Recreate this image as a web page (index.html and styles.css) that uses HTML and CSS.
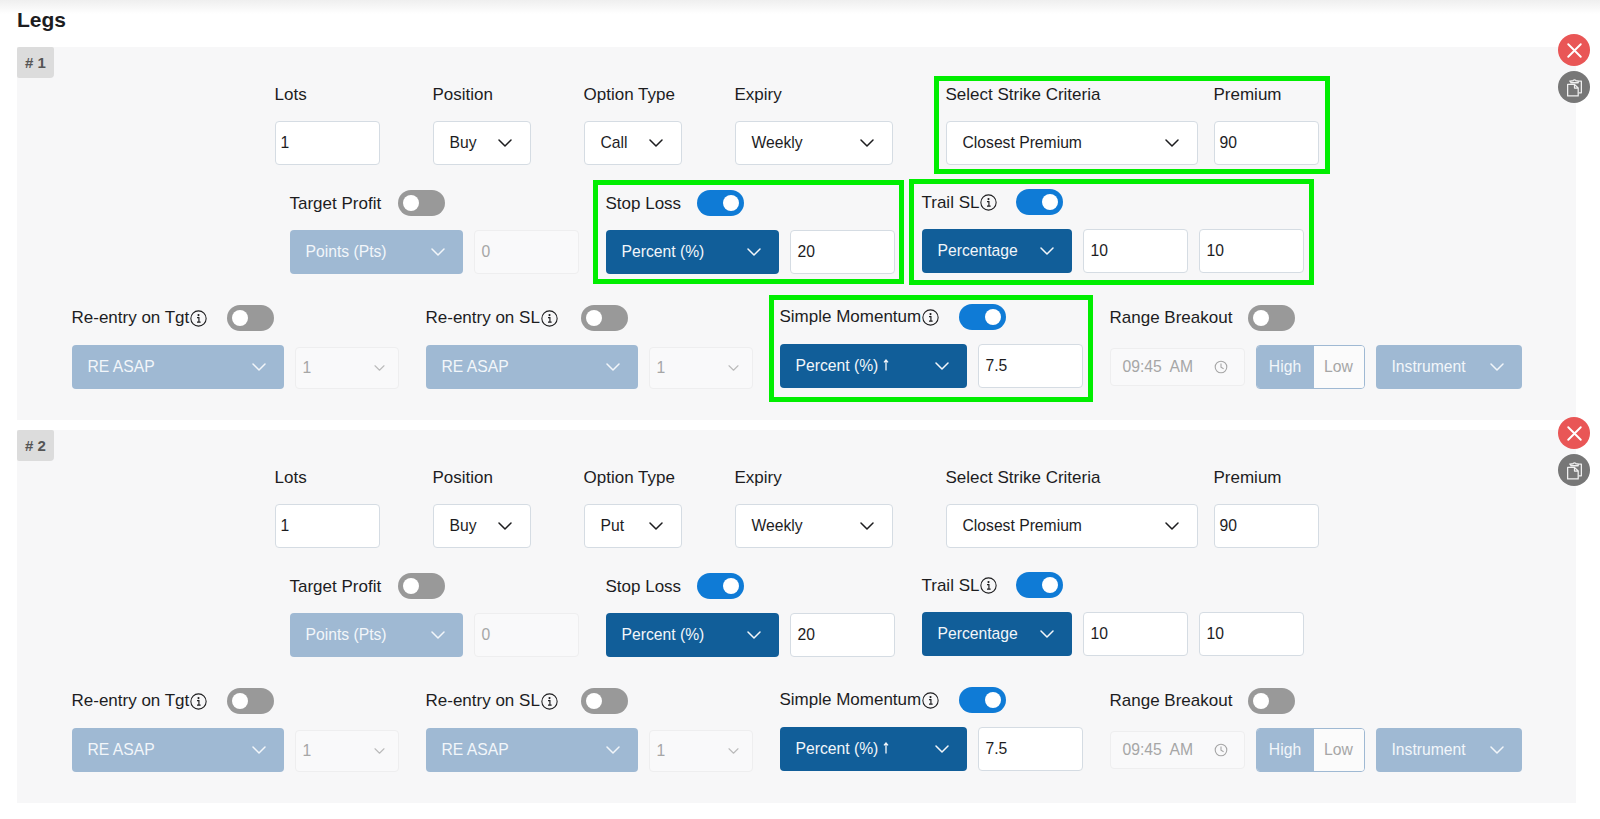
FILE: index.html
```html
<!DOCTYPE html>
<html lang="en">
<head>
  <meta charset="UTF-8">
  <meta name="viewport" content="width=device-width, initial-scale=1.0">
  <title>Legs</title>
  <link rel="stylesheet" href="styles.css">
</head>
<body>
  <svg class="sprites" width="0" height="0" aria-hidden="true">
    <symbol id="chev" viewBox="0 0 14 8"><path d="M1 1l6 6 6-6" fill="none" stroke="currentColor" stroke-width="1.5" stroke-linecap="round" stroke-linejoin="round"/></symbol>
    <symbol id="info" viewBox="0 0 16 16"><circle cx="8" cy="8" r="7.2" fill="none" stroke="currentColor" stroke-width="1"/><circle cx="8" cy="4.8" r="1" fill="currentColor"/><path d="M6.6 7.2H8.4V11.2M6.6 11.4H10" fill="none" stroke="currentColor" stroke-width="1.1"/></symbol>
    <symbol id="clock" viewBox="0 0 14 14"><circle cx="7" cy="7" r="5.8" fill="none" stroke="currentColor" stroke-width="1.1"/><path d="M7 3.6V7.2L9.6 8.8" fill="none" stroke="currentColor" stroke-width="1.1"/></symbol>
    <symbol id="cross" viewBox="0 0 12 12"><path d="M1 1l10 10M11 1L1 11" fill="none" stroke="currentColor" stroke-width="1.5" stroke-linecap="round"/></symbol>
    <symbol id="copy" viewBox="0 0 16 18"><path d="M4.5 4.5V2.8H6.5C6.7 1.4 9.3 1.4 9.5 2.8H11.5V4.5ZM11.5 3H14.5V14H12M4.5 3H3" fill="none" stroke="currentColor" stroke-width="1.2" stroke-linejoin="round"/><path d="M1.5 6H8L11.5 9.5V17H1.5ZM8 6V9.5H11.5" fill="none" stroke="currentColor" stroke-width="1.2" stroke-linejoin="round"/></symbol>
    <symbol id="up" viewBox="0 0 6 12"><path d="M3 11.5V1M1 3.4L3 1L5 3.4" fill="none" stroke="currentColor" stroke-width="1.3"/></symbol>
  </svg>

  <h1 class="title">Legs</h1>

  <!-- leg 1 -->
  <section class="leg">
    <div class="leg-tag"># 1</div>
    <div class="leg-actions">
      <button class="round-btn red"><svg class="ic-cross"><use href="#cross"/></svg></button>
      <button class="round-btn grey"><svg class="ic-copy"><use href="#copy"/></svg></button>
    </div>

    <div class="row row-main">
      <div class="field w-lots"><label>Lots</label><div class="box">1</div></div>
      <div class="field w-pos"><label>Position</label><div class="box pick">Buy<svg class="chev"><use href="#chev"/></svg></div></div>
      <div class="field w-pos"><label>Option Type</label><div class="box pick">Call<svg class="chev"><use href="#chev"/></svg></div></div>
      <div class="field w-expiry"><label>Expiry</label><div class="box pick">Weekly<svg class="chev"><use href="#chev"/></svg></div></div>
      <div class="strike mark mark-strike">
        <div class="field w-strike"><label>Select Strike Criteria</label><div class="box pick">Closest Premium<svg class="chev"><use href="#chev"/></svg></div></div>
        <div class="field w-lots"><label>Premium</label><div class="box">90</div></div>
      </div>
    </div>

    <div class="row row-exit">
      <div class="group">
        <div class="head"><span class="head-text w-target">Target Profit</span><span class="toggle"></span></div>
        <div class="controls"><div class="pick solid off w-unit">Points (Pts)<svg class="chev"><use href="#chev"/></svg></div><div class="box dim w-num">0</div></div>
      </div>
      <div class="group mark mark-stop">
        <div class="head"><span class="head-text w-stop">Stop Loss</span><span class="toggle on"></span></div>
        <div class="controls"><div class="pick solid w-unit">Percent (%)<svg class="chev"><use href="#chev"/></svg></div><div class="box w-num">20</div></div>
      </div>
      <div class="group up1 mark mark-trail">
        <div class="head"><span class="head-text w-trail">Trail SL<svg class="info"><use href="#info"/></svg></span><span class="toggle on"></span></div>
        <div class="controls"><div class="pick solid w-pct">Percentage<svg class="chev"><use href="#chev"/></svg></div><div class="box w-num">10</div><div class="box w-num">10</div></div>
      </div>
    </div>

    <div class="row row-extra">
      <div class="group">
        <div class="head"><span class="head-text w-re">Re-entry on Tgt<svg class="info"><use href="#info"/></svg></span><span class="toggle"></span></div>
        <div class="controls"><div class="pick solid off w-re-pick">RE ASAP<svg class="chev"><use href="#chev"/></svg></div><div class="box dim pick w-count">1<svg class="chev small"><use href="#chev"/></svg></div></div>
      </div>
      <div class="group">
        <div class="head"><span class="head-text w-re">Re-entry on SL<svg class="info"><use href="#info"/></svg></span><span class="toggle"></span></div>
        <div class="controls"><div class="pick solid off w-re-pick">RE ASAP<svg class="chev"><use href="#chev"/></svg></div><div class="box dim pick w-count">1<svg class="chev small"><use href="#chev"/></svg></div></div>
      </div>
      <div class="group up1 mark mark-momentum">
        <div class="head"><span class="head-text w-mom">Simple Momentum<svg class="info"><use href="#info"/></svg></span><span class="toggle on"></span></div>
        <div class="controls"><div class="pick solid w-mom-pick"><span>Percent (%)<svg class="up"><use href="#up"/></svg></span><svg class="chev"><use href="#chev"/></svg></div><div class="box w-num">7.5</div></div>
      </div>
      <div class="group">
        <div class="head"><span class="head-text w-range">Range Breakout</span><span class="toggle"></span></div>
        <div class="controls">
          <div class="box dim time">09:45&nbsp; AM<svg class="clock"><use href="#clock"/></svg></div>
          <div class="hilo"><span class="hilo-on">High</span><span class="hilo-off">Low</span></div>
          <div class="pick solid off w-inst">Instrument<svg class="chev"><use href="#chev"/></svg></div>
        </div>
      </div>
    </div>
  </section>

  <!-- leg 2 -->
  <section class="leg">
    <div class="leg-tag"># 2</div>
    <div class="leg-actions">
      <button class="round-btn red"><svg class="ic-cross"><use href="#cross"/></svg></button>
      <button class="round-btn grey"><svg class="ic-copy"><use href="#copy"/></svg></button>
    </div>

    <div class="row row-main">
      <div class="field w-lots"><label>Lots</label><div class="box">1</div></div>
      <div class="field w-pos"><label>Position</label><div class="box pick">Buy<svg class="chev"><use href="#chev"/></svg></div></div>
      <div class="field w-pos"><label>Option Type</label><div class="box pick">Put<svg class="chev"><use href="#chev"/></svg></div></div>
      <div class="field w-expiry"><label>Expiry</label><div class="box pick">Weekly<svg class="chev"><use href="#chev"/></svg></div></div>
      <div class="strike">
        <div class="field w-strike"><label>Select Strike Criteria</label><div class="box pick">Closest Premium<svg class="chev"><use href="#chev"/></svg></div></div>
        <div class="field w-lots"><label>Premium</label><div class="box">90</div></div>
      </div>
    </div>

    <div class="row row-exit">
      <div class="group">
        <div class="head"><span class="head-text w-target">Target Profit</span><span class="toggle"></span></div>
        <div class="controls"><div class="pick solid off w-unit">Points (Pts)<svg class="chev"><use href="#chev"/></svg></div><div class="box dim w-num">0</div></div>
      </div>
      <div class="group">
        <div class="head"><span class="head-text w-stop">Stop Loss</span><span class="toggle on"></span></div>
        <div class="controls"><div class="pick solid w-unit">Percent (%)<svg class="chev"><use href="#chev"/></svg></div><div class="box w-num">20</div></div>
      </div>
      <div class="group up1">
        <div class="head"><span class="head-text w-trail">Trail SL<svg class="info"><use href="#info"/></svg></span><span class="toggle on"></span></div>
        <div class="controls"><div class="pick solid w-pct">Percentage<svg class="chev"><use href="#chev"/></svg></div><div class="box w-num">10</div><div class="box w-num">10</div></div>
      </div>
    </div>

    <div class="row row-extra">
      <div class="group">
        <div class="head"><span class="head-text w-re">Re-entry on Tgt<svg class="info"><use href="#info"/></svg></span><span class="toggle"></span></div>
        <div class="controls"><div class="pick solid off w-re-pick">RE ASAP<svg class="chev"><use href="#chev"/></svg></div><div class="box dim pick w-count">1<svg class="chev small"><use href="#chev"/></svg></div></div>
      </div>
      <div class="group">
        <div class="head"><span class="head-text w-re">Re-entry on SL<svg class="info"><use href="#info"/></svg></span><span class="toggle"></span></div>
        <div class="controls"><div class="pick solid off w-re-pick">RE ASAP<svg class="chev"><use href="#chev"/></svg></div><div class="box dim pick w-count">1<svg class="chev small"><use href="#chev"/></svg></div></div>
      </div>
      <div class="group up1">
        <div class="head"><span class="head-text w-mom">Simple Momentum<svg class="info"><use href="#info"/></svg></span><span class="toggle on"></span></div>
        <div class="controls"><div class="pick solid w-mom-pick"><span>Percent (%)<svg class="up"><use href="#up"/></svg></span><svg class="chev"><use href="#chev"/></svg></div><div class="box w-num">7.5</div></div>
      </div>
      <div class="group">
        <div class="head"><span class="head-text w-range">Range Breakout</span><span class="toggle"></span></div>
        <div class="controls">
          <div class="box dim time">09:45&nbsp; AM<svg class="clock"><use href="#clock"/></svg></div>
          <div class="hilo"><span class="hilo-on">High</span><span class="hilo-off">Low</span></div>
          <div class="pick solid off w-inst">Instrument<svg class="chev"><use href="#chev"/></svg></div>
        </div>
      </div>
    </div>
  </section>
</body>
</html>
```

FILE: styles.css
```css
* {
  box-sizing: border-box;
}
html, body {
  height: 100%;
}
body {
  margin: 0;
  padding: 0 24px 0 17px;
  overflow: hidden;
  font-family: "Liberation Sans", Arial, sans-serif;
  font-size: 15.7px;
  color: #1d1d1f;
  background: linear-gradient(#efefef, #ffffff 14px);
}
.sprites {
  position: absolute;
}
.title {
  margin: 0;
  height: 47px;
  padding-top: 8px;
  font-size: 21px;
  line-height: 24px;
  font-weight: bold;
}
.leg {
  position: relative;
  height: 373px;
  margin-bottom: 10px;
  background: #f7f7f8;
}
.leg-tag {
  width: 37px;
  height: 31px;
  background: #dcdcdc;
  border-radius: 2px 2px 4px 2px;
  color: #555;
  font-size: 15px;
  font-weight: bold;
  line-height: 31px;
  text-align: center;
}
.leg-actions {
  position: absolute;
  top: -13px;
  right: -14px;
  display: flex;
  flex-direction: column;
  gap: 5px;
}
.round-btn {
  display: flex;
  align-items: center;
  justify-content: center;
  width: 32px;
  height: 32px;
  padding: 0;
  border: none;
  border-radius: 50%;
  color: #fff;
}
.round-btn.red {
  background: #e95656;
}
.round-btn.grey {
  background: #777;
  color: #f0f0f0;
}
.ic-cross {
  width: 15px;
  height: 15px;
}
.ic-copy {
  width: 17px;
  height: 19px;
}

.row {
  display: flex;
  justify-content: center;
  align-items: flex-start;
}
.row-main {
  gap: 53px;
  margin-top: 5px;
}
.row-exit {
  gap: 27px;
  margin-top: 25px;
}
.row-extra {
  gap: 27px;
  margin-top: 31px;
}

.field label {
  display: block;
  height: 24px;
  margin-bottom: 14px;
  font-size: 17px;
  line-height: 24px;
}
.strike {
  display: flex;
  gap: 16px;
}
.box {
  display: flex;
  align-items: center;
  height: 44px;
  padding: 0 7px;
  background: #fff;
  border: 1px solid #d5dce3;
  border-radius: 4px;
  font-size: 15.7px;
}
.row-main .box:not(.pick) {
  padding: 0 5px;
}
.box.dim {
  background: #f9f9fa;
  border-color: #eeeeef;
  color: #a6a6a6;
}
.pick {
  justify-content: space-between;
  padding: 0 18px 0 16px;
}
.solid {
  display: flex;
  align-items: center;
  height: 44px;
  background: #115e99;
  border-radius: 4px;
  color: #f2f6fa;
  font-size: 15.7px;
}
.solid.off {
  background: #9fb9d3;
}
.chev {
  flex: none;
  width: 14px;
  height: 8px;
}
.chev.small {
  width: 11px;
  height: 6px;
  color: #bbb;
}
.up {
  width: 6px;
  height: 12px;
  margin-left: 5px;
}
.w-lots { width: 105px; }
.w-pos { width: 98px; }
.w-expiry { width: 158px; }
.w-strike { width: 252px; }
.w-num { width: 105px; }
.w-unit { width: 173px; }
.w-pct { width: 150px; }
.w-re-pick { width: 212px; }
.w-count { width: 104px; height: 42px; margin-top: 1px; padding: 0 13px 0 7px; }
.w-mom-pick { width: 187px; }
.w-inst { width: 146px; }

.group {
  position: relative;
}
.group.up1 {
  margin-top: -1px;
}
.head {
  display: flex;
  align-items: center;
  height: 26px;
  margin-bottom: 14px;
}
.head-text {
  display: flex;
  align-items: center;
  font-size: 17px;
}
.row-exit .head-text {
  padding-top: 1px;
}
.w-target { width: 108px; }
.w-stop { width: 91px; }
.w-trail { width: 94px; }
.w-re { width: 155px; }
.w-mom { width: 179px; }
.w-range { width: 138px; }
.info {
  flex: none;
  width: 17px;
  height: 17px;
  margin-left: 1px;
}
.toggle {
  position: relative;
  width: 47px;
  height: 26px;
  border-radius: 13px;
  background: #999;
}
.toggle::after {
  content: "";
  position: absolute;
  top: 5px;
  left: 5px;
  width: 16px;
  height: 16px;
  border-radius: 50%;
  background: #fff;
}
.toggle.on {
  background: #0f7bd6;
}
.toggle.on::after {
  left: 26px;
}
.controls {
  display: flex;
  align-items: center;
  gap: 11px;
}
.time {
  width: 135px;
  height: 38px;
  padding: 0 16px 0 12px;
  justify-content: space-between;
}
.clock {
  width: 14px;
  height: 14px;
}
.hilo {
  display: flex;
  width: 109px;
  height: 44px;
  border: 1px solid #9fb9d3;
  border-radius: 4px;
  overflow: hidden;
  font-size: 15.7px;
  line-height: 42px;
  text-align: center;
}
.hilo-on {
  width: 57px;
  background: #9fb9d3;
  color: #f2f6fa;
}
.hilo-off {
  flex: 1;
  background: #fbfbfb;
  color: #a6a6a6;
}

/* green highlight frames drawn on top of the form */
.mark {
  position: relative;
}
.mark::before {
  content: "";
  position: absolute;
  border: 5px solid #00ee00;
  pointer-events: none;
}
.mark-strike::before { top: -7px; right: -11px; bottom: -9px; left: -12px; }
.mark-stop::before { top: -10px; right: -9px; bottom: -10px; left: -13px; }
.mark-trail::before { top: -10px; right: -10px; bottom: -12px; left: -13px; }
.mark-momentum::before { top: -9px; right: -10px; bottom: -14px; left: -11px; }
```
